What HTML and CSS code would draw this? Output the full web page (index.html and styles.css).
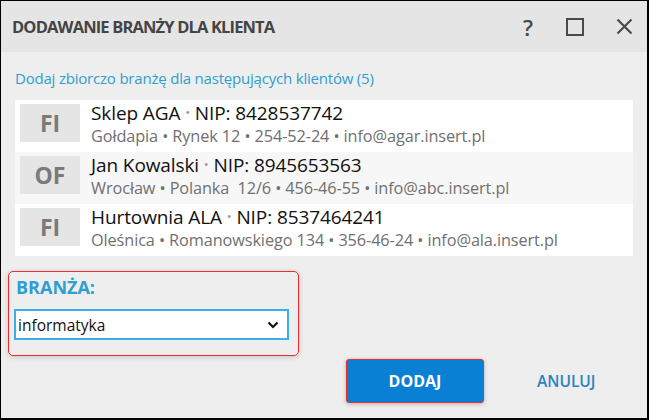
FILE: index.html
```html
<!DOCTYPE html>
<html lang="pl">
    <head>
        <meta charset="UTF-8">
        <meta name="viewport" content="width=device-width, initial-scale=1.0">
        <title>Dodawanie branży dla klienta</title>
        <link rel="stylesheet" href="styles.css">
    </head>
    <body>
        <div class="window">
            <div class="titlebar">
                <h1 class="title">DODAWANIE BRANŻY DLA KLIENTA</h1>
                <div class="controls">
                    <button class="ctrl help">?</button>
                    <button class="ctrl max">
                        <svg width="18" height="18" viewBox="0 0 18 18"><rect x="1" y="1" width="16" height="16" fill="none" stroke="#4a4a4a" stroke-width="2"/></svg>
                    </button>
                    <button class="ctrl">
                        <svg width="17" height="17" viewBox="0 0 17 17"><path d="M1.5 1.5 L15.5 15.5 M15.5 1.5 L1.5 15.5" stroke="#4a4a4a" stroke-width="2.2" fill="none"/></svg>
                    </button>
                </div>
            </div>

            <div class="content">
                <p class="lead">Dodaj zbiorczo branżę dla następujących klientów (5)</p>

                <ul class="clients">
                    <li class="client">
                        <span class="badge">FI</span>
                        <div class="info">
                            <div class="name">Sklep AGA <span class="dot">•</span> NIP: 8428537742</div>
                            <div class="details">Gołdapia • Rynek 12 • 254-52-24 • info@agar.insert.pl</div>
                        </div>
                    </li>
                    <li class="client">
                        <span class="badge">OF</span>
                        <div class="info">
                            <div class="name">Jan Kowalski <span class="dot">•</span> NIP: 8945653563</div>
                            <div class="details">Wrocław • Polanka&nbsp; 12/6 • 456-46-55 • info@abc.insert.pl</div>
                        </div>
                    </li>
                    <li class="client">
                        <span class="badge">FI</span>
                        <div class="info">
                            <div class="name">Hurtownia ALA <span class="dot">•</span> NIP: 8537464241</div>
                            <div class="details">Oleśnica • Romanowskiego 134 • 356-46-24 • info@ala.insert.pl</div>
                        </div>
                    </li>
                </ul>

                <div class="branch">
                    <label class="branch-label" for="branch">BRANŻA:</label>
                    <div class="select" id="branch">
                        <span>informatyka</span>
                        <svg width="12" height="8" viewBox="0 0 12 8"><path d="M1.5 1.5 L6 6 L10.5 1.5" stroke="#111" stroke-width="2.2" fill="none"/></svg>
                    </div>
                </div>

                <div class="actions">
                    <button class="btn-primary">DODAJ</button>
                    <button class="btn-link">ANULUJ</button>
                </div>
            </div>
        </div>
    </body>
</html>
```

FILE: styles.css
```css
body {
    margin: 0;
    font-family: "Open Sans", "Noto Sans", sans-serif;
}
.window {
    width: 649px;
    height: 420px;
    box-sizing: border-box;
    border: 1px solid #000;
    border-right-width: 2px;
    border-bottom-width: 2px;
    background-color: #eeeeee;
}
.titlebar {
    height: 51px;
    background-color: #e5e5e5;
    display: flex;
    align-items: center;
    justify-content: space-between;
    padding: 0 0 0 11px;
}
.title {
    margin: 0;
    font-size: 16.5px;
    font-weight: 700;
    color: #444;
    letter-spacing: -0.85px;
}
.controls {
    display: flex;
    align-items: center;
    gap: 25px;
    padding-right: 12px;
}
.ctrl {
    background: none;
    border: none;
    padding: 0;
    width: 22px;
    height: 22px;
    display: flex;
    align-items: center;
    justify-content: center;
    color: #4a4a4a;
    font-family: "Open Sans", sans-serif;
    font-size: 22px;
    font-weight: 600;
    cursor: pointer;
}
.max {
    margin-right: 2px;
}
.content {
    padding: 0 14px;
}
.lead {
    margin: 0;
    padding-top: 15px;
    height: 33px;
    font-size: 15px;
    color: #2e9fd0;
    line-height: 22px;
    letter-spacing: -0.2px;
}
.clients {
    list-style: none;
    margin: 0;
    padding: 0;
    background-color: #fff;
}
.client {
    display: flex;
    height: 52px;
    padding: 4px 0 0 5px;
    box-sizing: border-box;
    gap: 11px;
}
.client:nth-child(2) {
    background-color: #f7f7f7;
}
.badge {
    width: 60px;
    height: 38px;
    background-color: #e5e5e5;
    color: #7a7a7a;
    font-size: 23px;
    font-weight: 700;
    display: flex;
    align-items: center;
    justify-content: center;
    flex-shrink: 0;
}
.info {
    margin-top: -4px;
}
.name {
    font-size: 19px;
    color: #111;
    line-height: 25px;
    letter-spacing: -0.1px;
}
.dot {
    color: #999;
    font-size: 13px;
    vertical-align: 3px;
}
.details {
    font-size: 16.3px;
    color: #707070;
    line-height: 21px;
    letter-spacing: -0.1px;
}
.branch {
    margin: 15px 334px 0 -7px;
    height: 85px;
    box-sizing: border-box;
    border: 1.5px solid #ee2a2a;
    border-radius: 5px;
    box-shadow: 0 1px 5px rgba(0, 0, 0, 0.18);
    padding: 3px 9px 0 5px;
}
.branch-label {
    display: block;
    font-size: 18px;
    font-weight: 700;
    color: #2e9fd0;
    line-height: 24px;
    padding-left: 2px;
}
.select {
    margin-top: 10px;
    height: 31px;
    box-sizing: border-box;
    border: 2px solid #3bb0e8;
    background-color: #fff;
    display: flex;
    align-items: center;
    justify-content: space-between;
    padding: 0 8px 0 2px;
    font-size: 15.5px;
    color: #111;
}
.actions {
    display: flex;
    align-items: center;
    margin-top: 3px;
    padding-left: 331px;
    gap: 53px;
}
.btn-primary {
    width: 138px;
    height: 44px;
    background-color: #0a80d5;
    border: 1.5px solid #ee2a2a;
    border-radius: 3px;
    box-shadow: 0 1px 4px rgba(0, 0, 0, 0.25);
    color: #fff;
    font-family: "Open Sans", sans-serif;
    font-size: 16px;
    font-weight: 700;
    cursor: pointer;
}
.btn-link {
    background: none;
    border: none;
    padding: 0;
    color: #2a82c2;
    font-family: "Open Sans", sans-serif;
    font-size: 15.5px;
    font-weight: 600;
    cursor: pointer;
}
```
